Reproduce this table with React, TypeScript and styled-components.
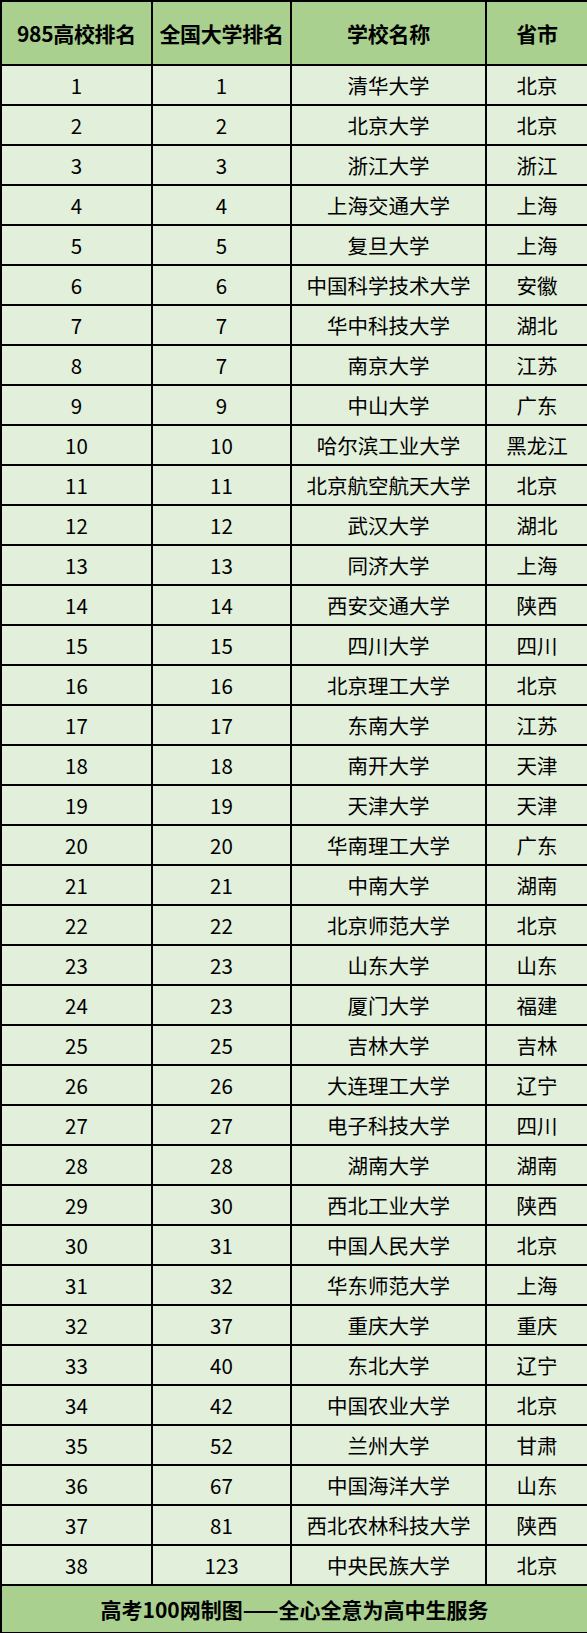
import styled, { createGlobalStyle } from "styled-components";

const GlobalStyle = createGlobalStyle`
  html, body {
    margin: 0;
    padding: 0;
    background: #ffffff;
  }
`;

const Table = styled.table`
  width: 587px;
  border-collapse: collapse;
  table-layout: fixed;
  font-family: "Noto Sans CJK SC", "Noto Sans", sans-serif;
  color: #000;
`;

const HeadRow = styled.tr`
  height: 64px;
  background: #a9d08e;
`;

const Row = styled.tr`
  height: 40px;
  background: #e2efda;
`;

const FootRow = styled.tr`
  height: 48px;
  background: #a9d08e;
`;

const HeadCell = styled.th`
  border: 2px solid #000;
  padding: 0;
  font-size: 21px;
  font-weight: 700;
  text-align: center;
  vertical-align: middle;
  white-space: nowrap;
  letter-spacing: -0.3px;
`;

const Cell = styled.td`
  border: 2px solid #000;
  padding: 0;
  font-size: 20.5px;
  font-weight: 400;
  text-align: center;
  vertical-align: middle;
  white-space: nowrap;
  line-height: 1;
`;

const FootCell = styled.td`
  border: 2px solid #000;
  padding: 0;
  font-size: 21px;
  font-weight: 700;
  text-align: center;
  vertical-align: middle;
  white-space: nowrap;
`;

const rows: [number, number, string, string][] = [
  [1, 1, "清华大学", "北京"],
  [2, 2, "北京大学", "北京"],
  [3, 3, "浙江大学", "浙江"],
  [4, 4, "上海交通大学", "上海"],
  [5, 5, "复旦大学", "上海"],
  [6, 6, "中国科学技术大学", "安徽"],
  [7, 7, "华中科技大学", "湖北"],
  [8, 7, "南京大学", "江苏"],
  [9, 9, "中山大学", "广东"],
  [10, 10, "哈尔滨工业大学", "黑龙江"],
  [11, 11, "北京航空航天大学", "北京"],
  [12, 12, "武汉大学", "湖北"],
  [13, 13, "同济大学", "上海"],
  [14, 14, "西安交通大学", "陕西"],
  [15, 15, "四川大学", "四川"],
  [16, 16, "北京理工大学", "北京"],
  [17, 17, "东南大学", "江苏"],
  [18, 18, "南开大学", "天津"],
  [19, 19, "天津大学", "天津"],
  [20, 20, "华南理工大学", "广东"],
  [21, 21, "中南大学", "湖南"],
  [22, 22, "北京师范大学", "北京"],
  [23, 23, "山东大学", "山东"],
  [24, 23, "厦门大学", "福建"],
  [25, 25, "吉林大学", "吉林"],
  [26, 26, "大连理工大学", "辽宁"],
  [27, 27, "电子科技大学", "四川"],
  [28, 28, "湖南大学", "湖南"],
  [29, 30, "西北工业大学", "陕西"],
  [30, 31, "中国人民大学", "北京"],
  [31, 32, "华东师范大学", "上海"],
  [32, 37, "重庆大学", "重庆"],
  [33, 40, "东北大学", "辽宁"],
  [34, 42, "中国农业大学", "北京"],
  [35, 52, "兰州大学", "甘肃"],
  [36, 67, "中国海洋大学", "山东"],
  [37, 81, "西北农林科技大学", "陕西"],
  [38, 123, "中央民族大学", "北京"],
];

export default function App() {
  return (
    <>
      <GlobalStyle />
      <Table>
        <colgroup>
          <col style={{ width: 151 }} />
          <col style={{ width: 139 }} />
          <col style={{ width: 195 }} />
          <col style={{ width: 102 }} />
        </colgroup>
        <thead>
          <HeadRow>
            <HeadCell>985高校排名</HeadCell>
            <HeadCell>全国大学排名</HeadCell>
            <HeadCell>学校名称</HeadCell>
            <HeadCell>省市</HeadCell>
          </HeadRow>
        </thead>
        <tbody>
          {rows.map(([rank, national, name, province]) => (
            <Row key={rank}>
              <Cell>{rank}</Cell>
              <Cell>{national}</Cell>
              <Cell>{name}</Cell>
              <Cell>{province}</Cell>
            </Row>
          ))}
        </tbody>
        <tfoot>
          <FootRow>
            <FootCell colSpan={4}>高考100网制图——全心全意为高中生服务</FootCell>
          </FootRow>
        </tfoot>
      </Table>
    </>
  );
}
